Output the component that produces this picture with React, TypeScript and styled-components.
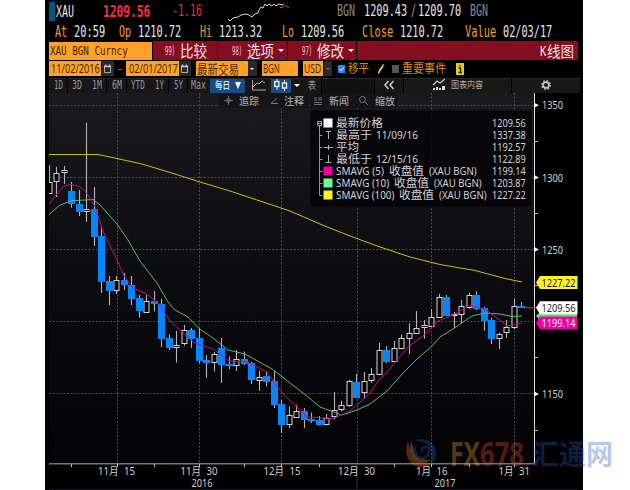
import React, { useLayoutEffect, useRef, useState } from 'react';
import styled, { createGlobalStyle } from 'styled-components';

const sans = '"Noto Sans", "Noto Sans CJK SC", sans-serif';
const mono = '"DejaVu Sans Mono", "Noto Sans CJK SC", monospace';

const GlobalStyle = createGlobalStyle`
  * { box-sizing: border-box; }
  body { margin: 0; background: #fff; overflow: hidden; }
`;

const Page = styled.div`
  width: 630px;
  height: 490px;
  padding-left: 45px;
  position: relative;
  overflow: hidden;
  background: #fff;
  font-family: ${sans};
`;

const Terminal = styled.main`
  width: 538px;
  height: 490px;
  background: #000;
  display: flex;
  flex-direction: column;
`;

const Bar = styled.div<{ $h: number; $pt?: number }>`
  height: ${(p) => p.$h}px;
  padding: ${(p) => p.$pt ?? 0}px 0 0 4px;
  display: flex;
  align-items: center;
  flex: none;
`;

const FitBox = styled.span<{ $w: number; $ml: number; $lh: number }>`
  display: block;
  flex: none;
  width: ${(p) => p.$w}px;
  height: ${(p) => p.$lh}px;
  line-height: ${(p) => p.$lh}px;
  margin-left: ${(p) => p.$ml}px;
  white-space: nowrap;
`;

const FitText = styled.span<{ $size: number; $color: string; $mono?: boolean; $weight: number }>`
  display: inline-block;
  vertical-align: top;
  transform-origin: 0 50%;
  font-family: ${(p) => (p.$mono ? mono : sans)};
  font-size: ${(p) => p.$size}px;
  font-weight: ${(p) => p.$weight};
  color: ${(p) => p.$color};
`;

type LabelProps = { text: string; w: number; ml?: number; size?: number; lh?: number; color?: string; fixed?: boolean; weight?: number };

/* Condenses a line of text to the given width. */
function Label({ text, w, ml = 0, size = 12, lh = 16, color = '#e6e6e6', fixed, weight = 400 }: LabelProps) {
  const ref = useRef<HTMLSpanElement>(null);
  const [scale, setScale] = useState(1);
  useLayoutEffect(() => {
    if (ref.current) setScale(w / ref.current.offsetWidth);
  }, [w, text]);
  return (
    <FitBox $w={w} $ml={ml} $lh={lh}>
      <FitText ref={ref} $size={size} $color={color} $mono={fixed} $weight={weight} style={{ transform: `scaleX(${scale})` }}>
        {text}
      </FitText>
    </FitBox>
  );
}

const Marker = styled.i`
  width: 6px;
  height: 19px;
  background: #00577c;
  flex: none;
`;

const Spark = styled.svg`
  width: 64px;
  height: 20px;
  margin-left: 24px;
  flex: none;
`;

const Cell = styled.div<{ $w: number; $bg: string; $ml?: number; $h?: number }>`
  width: ${(p) => p.$w}px;
  height: ${(p) => p.$h ?? 19}px;
  margin-left: ${(p) => p.$ml ?? 0}px;
  background: ${(p) => p.$bg};
  display: flex;
  align-items: center;
  flex: none;
`;

const Tab = styled(Cell)`
  background: ${(p) => p.$bg};
  justify-content: center;
  box-shadow: inset 0 1px #292929;
`;

const Caret = styled.i<{ $ml: number; $s?: number; $h?: number; $color?: string }>`
  width: 0;
  height: 0;
  margin-left: ${(p) => p.$ml}px;
  border: ${(p) => p.$s ?? 3}px solid transparent;
  border-top: ${(p) => p.$h ?? p.$s ?? 3}px solid ${(p) => p.$color ?? '#fff'};
  border-bottom-width: 0;
  flex: none;
`;

const Check = styled.span<{ $on?: boolean; $ml: number }>`
  width: 7px;
  height: 8px;
  margin-left: ${(p) => p.$ml}px;
  background: ${(p) => (p.$on ? '#198cff' : '#555')};
  display: flex;
  flex: none;
`;

const Icon = styled.svg<{ $ml?: number }>`
  margin-left: ${(p) => p.$ml ?? 0}px;
  flex: none;
  overflow: visible;
`;

const ChartArea = styled.section`
  position: relative;
  flex: 1;
`;

const ChartSvg = styled.svg`
  display: block;
  width: 538px;
  height: 397px;
`;

const Tools = styled.div`
  position: absolute;
  top: 0;
  left: 174px;
  height: 16px;
  display: flex;
  gap: 1px;
`;

const Legend = styled.div`
  position: absolute;
  left: 266px;
  top: 18px;
  width: 220px;
  height: 95px;
  padding-top: 5.5px;
  border-radius: 3px;
  background: rgba(5, 5, 9, 0.88);
  box-shadow: 0 0 0 1px #0c0c10;
`;

const LegendRow = styled.div`
  height: 12.1px;
  display: flex;
  align-items: center;
`;

const LegendMark = styled.svg`
  width: 20px;
  height: 12.1px;
  margin-left: 5px;
  flex: none;
`;

const LegendName = styled.div`
  width: 156px;
  display: flex;
`;

const Watermark = styled.svg`
  position: absolute;
  left: 400px;
  top: 430px;
  width: 220px;
  height: 45px;
  opacity: 0.33;
`;

const Calendar = () => (
  <Icon width="9" height="10" viewBox="0 0 9 10" $ml={1}>
    <path d="M1.5 3v5.500h6V3" fill="none" stroke="#aaa" />
    <path d="M1 2.500h7M2.500 0.500v2M6.500 0.500v2" stroke="#ccc" strokeWidth="1.400" />
  </Icon>
);

/* [high, body top, body bottom, low, falling] in screen rows */
const candles: [number, number, number, number, number][] = [
  [165, 181.7, 194, 194, 0], [166.7, 172.5, 181.5, 197, 0], [166, 170, 173, 184, 0], [182, 191, 204, 207.5, 1],
  [190, 203.7, 212, 216, 1], [122.7, 209, 212, 222, 0], [187, 209, 236.7, 246, 1], [226, 236, 281.7, 293, 1],
  [276, 280.5, 291, 305, 1], [276, 280, 290.7, 294, 0], [273, 279.7, 285.3, 290, 1], [276, 285, 298.7, 305, 1],
  [295, 297.7, 310.7, 317.5, 1], [295, 301, 312.7, 312.7, 0], [291, 300.7, 304, 311.5, 1], [299, 303.7, 339, 347, 1],
  [334.5, 338, 348, 350, 1], [331, 345.3, 347.7, 362.5, 0], [325, 330, 343.7, 345.7, 0], [328, 330, 338.7, 348, 1],
  [328.5, 337.7, 361, 363, 1], [355, 360.3, 362.5, 378, 1], [352, 353.7, 362.5, 371.5, 0], [338, 348, 365, 383, 1],
  [356.5, 363.7, 365.5, 369, 1], [350, 359, 365.5, 371, 0], [351.5, 359, 364, 365, 1], [362, 363.3, 380, 384, 1],
  [371, 376.5, 380.7, 391, 0], [372, 376, 382, 386.5, 1], [371, 381.3, 404.7, 408, 1], [400, 404, 425.3, 433, 1],
  [406.5, 415.3, 424.7, 428, 0], [405, 411, 417.7, 418, 0], [408, 411, 419.7, 428, 1], [412.5, 419, 421, 423, 1],
  [416, 420, 425, 425.3, 1], [414, 418, 424.7, 425.5, 0], [392, 410.3, 417.3, 419, 0], [400.7, 405.3, 410.3, 411.5, 0],
  [380, 381.3, 406.3, 406.7, 0], [374, 382, 398, 398, 1], [372, 380.7, 393.3, 398.7, 0], [368, 374, 381, 383, 0],
  [342.7, 350, 374.5, 374.7, 0], [346, 349.7, 361.7, 363, 1], [341, 348.3, 361.7, 362, 0], [334.7, 338.3, 348.7, 349.3, 0],
  [323.3, 333.3, 338.7, 354, 0], [311, 328, 333.7, 334, 0], [320, 325, 328.3, 338.7, 0], [309, 317.3, 326.7, 326.7, 0],
  [294, 297, 317.7, 317.7, 0], [295, 296.7, 315.7, 316, 1], [312, 314, 316, 328, 0], [300, 306, 315, 323.3, 0],
  [292.7, 294.7, 308.3, 308.7, 0], [291.3, 294.7, 308.7, 310, 1], [306.7, 308, 321, 330.7, 1], [317.7, 320, 338.7, 344, 1],
  [332.7, 334.3, 338.7, 349, 0], [320, 326.7, 332.7, 338, 0], [298.7, 306, 327.7, 329.3, 0], [302, 306, 308, 308, 1],
];

const sma5 =
  '49,204.5 56,195 64,186 71,184.5 79,186 86.5,193 95,206.7 102.5,230 117,260 124,276 133,288 146.7,294 160,305 170,321 182,332 195,343 213,349 229,361 247,362 267,372 282,393 300,410 307,417 333,418.5 350,411 370,393 379,380 387,372 408,347 423,336 438,321 453,315 469,305.7 485,309 495,316.7 507,326 521.7,323';
const sma10 =
  '49,214.5 60,205 72,200.7 85,200 93,199.5 100,205 117,224 128,240 140,261 157,283 168,302 175,310 188,317 198,327.7 213,338 228,350 245,354 272,369 303,393 320,407 342,415 357,410 370,404 387,391 403,373 417,359 432,346 440,337 453,329 472,316 485,313 500,314 512,316.5 522,316';
const sma100 =
  '49,154.5 98,154.5 117,158.5 142,164 175,174 200,182 230,191 260,201 290,211 320,224 350,236 380,247 410,257 440,264.5 475,270.5 505,278.5 522,282';

const columns = [117, 199, 281.5, 357, 431.5, 514.5];
const prices: [number, string][] = [[105.3, '1350'], [177.5, '1300'], [249.5, '1250'], [394, '1150']];
const rows = [105.5, 177.5, 249.5, 321.5, 393.5];
const dates: [number, string, string][] = [[98, '11', '15'], [180.5, '11', '30'], [263.5, '12', '15'], [338, '12', '30'], [416, '1', '16'], [498.5, '1', '31']];
const tags: [number, string, string, string][] = [[282.5, '#fff22b', '#222', '1227.22'], [323, '#f000a0', '#fff', '1199.14'], [307.8, '#fff', '#222', '1209.56']];

function Chart() {
  return (
    <ChartSvg viewBox="45 93 538 397">
      <defs>
        <linearGradient id="field" x1="0" y1="0" x2="0" y2="1">
          <stop offset="0" stopColor="#1a1a1d" />
          <stop offset="0.45" stopColor="#0d0d11" />
          <stop offset="1" stopColor="#030306" />
        </linearGradient>
        <clipPath id="plot"><rect x="49" y="93" width="485" height="370" /></clipPath>
      </defs>
      <rect x="49" y="93" width="485" height="370" fill="url(#field)" />
      <g stroke="#4c4c50" strokeWidth="1" strokeDasharray="2 1.6">
        {columns.map((x) => <path key={x} d={`M${Math.floor(x) + 0.5} 93V463`} />)}
        {rows.map((y) => <path key={y} d={`M49 ${y}H534`} />)}
      </g>
      <g clipPath="url(#plot)">
        {candles.map(([hi, top, bottom, lo, falling], i) => {
          const x = Math.floor(49.3 + i * 7.5) + 0.5;
          const t = Math.round(top);
          const b = Math.max(Math.round(bottom), t + 2);
          return (
            <g key={i}>
              <path d={`M${x} ${hi}V${t}M${x} ${b}V${lo}`} stroke="#b5b5b5" strokeWidth="1.1" />
              {falling ? (
                <rect x={x - 3.5} y={t} width="7" height={b - t} fill="#0785ff" />
              ) : (
                <rect x={x - 2.5} y={t + 0.5} width="5" height={b - t - 1} fill="#050508" stroke="#d4d4d4" />
              )}
            </g>
          );
        })}
        <g fill="none" strokeWidth="1" strokeLinejoin="round">
          <polyline points={sma100} stroke="#c9bd1c" />
          <polyline points={sma10} stroke="#58b86b" />
          <polyline points={sma5} stroke="#bd0b86" />
        </g>
      </g>
      <path d="M534.5 93V464" stroke="#ddd" />
      <path d="M49 463.7H535" stroke="#77757a" strokeWidth="1.600" />
      <path d="M71.5 464v3M154.5 464v3M244.5 464v3M319.5 464v3M394.5 464v3M469.5 464v3M117.5 464v3M199.5 464v3M281.5 464v3M431.5 464v3M514.5 464v3M535 141.5h3M535 213.5h3M535 285.5h3M535 357.5h3M535 430.5h3" stroke="#bbb" />
      <path d="M357 464V490" stroke="#34343a" />
      <path d="M49 489.5H577" stroke="#15152c" />
      <g fontFamily={sans} fontSize="10.5" fill="#d2d2d2">
        {prices.map(([y, label]) => (
          <g key={label}>
            <path d={`M534 ${y - 2.5}l5 2.5-5 2.5z`} fill="#fff" />
            <text x="542" y={y + 4} textLength="21" lengthAdjust="spacingAndGlyphs">{label}</text>
          </g>
        ))}
        {dates.map(([x, month, day]) => {
          const mw = month.length * 5.5;
          return (
            <g key={x}>
              <text x={x} y="475" textLength={mw} lengthAdjust="spacingAndGlyphs">{month}</text>
              <text x={x + mw} y="475" textLength="9.500" lengthAdjust="spacingAndGlyphs">月</text>
              <text x={x + mw + 15} y="475" textLength="11" lengthAdjust="spacingAndGlyphs">{day}</text>
            </g>
          );
        })}
        <text x="191.5" y="487" textLength="21" lengthAdjust="spacingAndGlyphs">2016</text>
        <text x="434.5" y="487" textLength="21" lengthAdjust="spacingAndGlyphs">2017</text>
      </g>
      <path d="M525 307.8H537" stroke="#9a581b" />
      <path d="M536 316l3-3h38v6h-38z" fill="#5ee07a" />
      {tags.map(([y, bg, fg, label]) => (
        <g key={label}>
          <path d={`M536 ${y}l4-6.500h37.500v13H540z`} fill={bg} />
          <text x="541.5" y={y + 4.2} fontFamily={sans} fontSize="11" fill={fg} textLength="34" lengthAdjust="spacingAndGlyphs">{label}</text>
        </g>
      ))}
    </ChartSvg>
  );
}

const legend: { parts: [string, number, number][]; value: string; color?: string; mark?: string }[] = [
  { parts: [['最新价格', 47, 0]], value: '1209.56', color: '#fff' },
  { parts: [['最高于', 36, 0], ['11/09/16', 42, 4]], value: '1337.38', mark: 'M10 2.5h5M12.5 2v8' },
  { parts: [['平均', 23, 0]], value: '1192.57', mark: 'M8 6.5h9M12.5 4v5M11 6.5h3' },
  { parts: [['最低于', 36, 0], ['12/15/16', 42, 4]], value: '1122.89', mark: 'M9.5 9.5h6M12.5 2v8' },
  { parts: [['SMAVG (5)', 48, 0], ['收盘值', 35, 5], ['(XAU BGN)', 48, 5]], value: '1199.14', color: '#f000a0' },
  { parts: [['SMAVG (10)', 53, 0], ['收盘值', 35, 5], ['(XAU BGN)', 48, 5]], value: '1203.87', color: '#6cff8b' },
  { parts: [['SMAVG (100)', 58, 0], ['收盘值', 35, 5], ['(XAU BGN)', 48, 5]], value: '1227.22', color: '#fff21f' },
];

const ranges: [string, number, number][] = [['1D', 18, 9], ['3D', 19, 10], ['1M', 19, 10], ['6M', 19, 10], ['YTD', 23, 14], ['1Y', 18, 9], ['5Y', 18, 9], ['Max', 22, 15]];

export default function App() {
  const tab = '#171717';
  const orange = '#ffa028';
  return (
    <Page>
      <GlobalStyle />
      <Terminal>
        <Bar $h={22} $pt={1}>
          <Marker />
          <Label text="XAU" w={18} ml={1} size={16} lh={19} fixed />
          <Label text="1209.56" w={47} ml={29} size={16} lh={19} color="#ff2b4b" weight={700} fixed />
          <Label text="-1.16" w={30} ml={22} size={15} lh={19} color="#e82645" fixed />
          <Spark viewBox="0 0 64 20">
            <path d="M2 17l2 2 3-3 5-1 3-2 5-1 3 1 3 2 3-3 3-1 1-3 2-3 2 1 2-4 2 2 2-2 3 2 2-2 2 2 3-2 3 1 2-1" fill="none" stroke="#ddd" />
            <path d="M54 5.500h3l2-2 2 1 2 1.500" fill="none" stroke="#d92c2c" />
          </Spark>
          <Label text="BGN" w={18} ml={47} size={15} lh={19} color="#88888a" fixed />
          <Label text="1209.43" w={43} ml={9} size={15} lh={19} fixed />
          <Label text="/" w={5} ml={4} size={15} lh={19} color="#aaa" fixed />
          <Label text="1209.70" w={43} ml={2} size={15} lh={19} fixed />
          <Label text="BGN" w={18} ml={9} size={15} lh={19} color="#88888a" fixed />
        </Bar>
        <Bar $h={19}>
          <Label text="At" w={12} ml={6} size={15} color="#f79a1c" fixed />
          <Label text="20:59" w={31} ml={7} size={15} fixed />
          <Label text="Op" w={12} ml={14} size={15} color="#f79a1c" fixed />
          <Label text="1210.72" w={43} ml={7} size={15} fixed />
          <Label text="Hi" w={12} ml={19} size={15} color="#f79a1c" fixed />
          <Label text="1213.32" w={43} ml={7} size={15} fixed />
          <Label text="Lo" w={12} ml={20} size={15} color="#f79a1c" fixed />
          <Label text="1209.56" w={43} ml={6.5} size={15} fixed />
          <Label text="Close" w={31} ml={18.5} size={15} color="#f79a1c" fixed />
          <Label text="1210.72" w={43} ml={7} size={15} fixed />
          <Label text="Value" w={31} ml={22} size={15} color="#f79a1c" fixed />
          <Label text="02/03/17" w={49} ml={6.5} size={15} fixed />
        </Bar>
        <Bar $h={19}>
          <Cell $w={103} $bg={orange} $h={18}>
            <Label text="XAU BGN Curncy" w={78} ml={1} size={13} color="#3c2508" fixed />
          </Cell>
          <Cell $w={64} $bg="#870d20" $ml={1}>
            <Label text="99)" w={10} ml={12} size={13} color="#e9ccd0" fixed />
            <Label text="比较" w={27} ml={5} size={16} />
          </Cell>
          <Cell $w={69} $bg="#870d20" $ml={1}>
            <Label text="98)" w={10} ml={14} size={13} color="#e9ccd0" fixed />
            <Label text="选项" w={27} ml={5} size={16} />
            <Caret $ml={4} />
          </Cell>
          <Cell $w={68} $bg="#870d20" $ml={1}>
            <Label text="97)" w={10} ml={14} size={13} color="#e9ccd0" fixed />
            <Label text="修改" w={27} ml={5} size={16} />
            <Caret $ml={4} />
          </Cell>
          <Cell $w={221} $bg="#870d20" $ml={1}>
            <Label text="K" w={6} ml={183} size={14} fixed />
            <Label text="线图" w={27} ml={0.5} size={15} />
          </Cell>
        </Bar>
        <Bar $h={17}>
          <Cell $w={52} $bg={orange} $h={15}><Label text="11/02/2016" w={49} ml={2} size={12} lh={14} color="#4a2a05" /></Cell>
          <Cell $w={12} $bg="#292929" $h={15} $ml={1}><Calendar /></Cell>
          <Label text="-" w={4} ml={4} lh={14} color="#c58025" />
          <Cell $w={53} $bg={orange} $h={15} $ml={4}><Label text="02/01/2017" w={49} ml={3} size={12} lh={14} color="#4a2a05" /></Cell>
          <Cell $w={12} $bg="#292929" $h={15}><Calendar /></Cell>
          <Cell $w={52} $bg={orange} $h={15} $ml={5}><Label text="最新交易" w={42} ml={1} size={13} lh={14} color="#4a2a05" /></Cell>
          <Cell $w={9} $bg="#292929" $h={15}><Caret $ml={2} $s={2} /></Cell>
          <Cell $w={36} $bg={orange} $h={15} $ml={5}><Label text="BGN" w={17} ml={1} lh={14} color="#4a2a05" /></Cell>
          <Cell $w={20} $bg={orange} $h={15} $ml={5}><Label text="USD" w={17} ml={1} lh={14} color="#4a2a05" /></Cell>
          <Cell $w={8} $bg="#292929" $h={15} $ml={1}><Caret $ml={2} $s={2} $color="#777" /></Cell>
          <Check $on $ml={6}>
            <svg width="7" height="8" viewBox="0 0 7 8"><path d="M1.3 4l1.5 2L6 2" fill="none" stroke="#fff" /></svg>
          </Check>
          <Label text="移平" w={21} ml={3} size={12.5} lh={14} color="#dc8610" />
          <Icon width="8" height="12" viewBox="0 0 8 12" $ml={8}>
            <path d="M1 11l1-4 4-6 1.5 1-4 6z" fill="#f1c87c" />
            <path d="M1 11l1-3 1 1z" fill="#fff" />
            <path d="M5 2l2 1" stroke="#d33" />
          </Icon>
          <Check $ml={7} />
          <Label text="重要事件" w={44} ml={3} size={12.5} lh={14} color="#dc8610" />
          <Icon width="8" height="12" viewBox="0 0 8 12" $ml={10}>
            <rect width="8" height="12" fill="#e6c91d" />
            <path d="M2.500 5h2v4M2.5 9.5h3.500M4 2v1.500" fill="none" stroke="#222" strokeWidth="1.3" />
          </Icon>
        </Bar>
        <Bar $h={16}>
          {ranges.map(([name, cell, w]) => (
            <Tab key={name} $w={cell} $h={15} $bg={tab} $ml={name === '1D' ? 0 : 0.7}>
              <Label text={name} w={w} size={11.5} lh={14} color="#999" fixed />
            </Tab>
          ))}
          <Tab $w={35.5} $h={15} $bg="#194c82" $ml={0}>
            <Label text="每日" w={15} size={10} lh={14} color="#e1eaf4" weight={500} />
            <Caret $ml={5} $s={3} $h={7} />
          </Tab>
          <Tab $w={25} $h={15} $bg={tab} $ml={1}>
            <Icon width="16" height="12" viewBox="0 0 16 12">
              <path d="M1.5 1v10H15M2 8l4-4 2 1 3-3 3 2" fill="none" stroke="#aaa" />
            </Icon>
          </Tab>
          <Tab $w={20} $h={15} $bg="#194c82">
            <Icon width="16" height="12" viewBox="0 0 16 12">
              <path d="M4 0v11M11.5 1v11" stroke="#ddd" />
              <rect x="1.8" y="2.5" width="4" height="5" fill="#194c82" stroke="#eee" strokeWidth="1.4" />
              <rect x="9.5" y="4" width="4" height="5" fill="#194c82" stroke="#eee" strokeWidth="1.4" />
            </Icon>
          </Tab>
          <Tab $w={12} $h={15} $bg={tab}><Caret $ml={0} /></Tab>
          <Tab $w={18} $h={15} $bg={tab}><Label text="表" w={8} size={10} lh={14} color="#999" /></Tab>
          <Tab $w={52} $h={15} $bg="#101010" $ml={1} />
          <Tab $w={28} $h={15} $bg={tab} $ml={1}>
            <Icon width="12" height="10" viewBox="0 0 12 10"><path d="M5.5 1L2 5l3.500 4M10.500 1L7 5l3.500 4" fill="none" stroke="#ccc" strokeWidth="1.5" /></Icon>
          </Tab>
          <Tab $w={107} $h={15} $bg={tab} $ml={1}>
            <Icon width="14" height="12" viewBox="0 0 14 12">
              <path d="M1 6l4-4 3 2 5-4" fill="none" stroke="#ccc" strokeWidth="1.2" />
              <path d="M1 9h2v2H1zM4 8h2v3H4zM7 9h2v2H7zM10 7h3v4h-3z" fill="#ddd" />
            </Icon>
            <Label text="图表内容" w={32} ml={5} size={9.5} lh={14} color="#aaa" />
          </Tab>
          <Tab $w={68} $h={15} $bg={tab} $ml={1}>
            <Icon width="12" height="12" viewBox="0 0 12 12">
              <circle cx="6" cy="6" r="4.200" fill="none" stroke="#bbb" strokeWidth="1.6" strokeDasharray="1.700 1.600" />
              <circle cx="6" cy="6" r="2.900" fill="none" stroke="#c4c4c4" strokeWidth="1.700" />
            </Icon>
          </Tab>
        </Bar>
        <ChartArea>
          <Chart />
          <Tools>
            <Cell $w={44} $h={15} $bg="#141416">
              <Icon width="9" height="9" viewBox="0 0 9 9" $ml={5}><path d="M4.500 0v9M0 4.500h9M3 3h3v3H3z" fill="none" stroke="#68686b" /></Icon>
              <Label text="追踪" w={20} ml={6} size={10.5} lh={14} color="#b4b4b4" />
            </Cell>
            <Cell $w={45} $h={15} $bg="#141416">
              <Icon width="8" height="8" viewBox="0 0 8 8" $ml={6}><path d="M7 1L1 6.500h7" fill="none" stroke="#79797c" /></Icon>
              <Label text="注释" w={20} ml={6} size={10.5} lh={14} color="#b4b4b4" />
            </Cell>
            <Cell $w={43} $h={15} $bg="#141416">
              <Icon width="8" height="8" viewBox="0 0 8 8" $ml={4}><path d="M0 1h3M4 1h4M0 3h3M4 3h4M0 5.500h8M0 7.500h8" stroke="#707073" /></Icon>
              <Label text="新闻" w={20} ml={7} size={10.5} lh={14} color="#b4b4b4" />
            </Cell>
            <Cell $w={44} $h={15} $bg="#141416">
              <Icon width="9" height="9" viewBox="0 0 9 9" $ml={5}><path d="M5.500 5.500L9 9" stroke="#777" /><circle cx="3.500" cy="3.500" r="3" fill="none" stroke="#777" /></Icon>
              <Label text="缩放" w={20} ml={7} size={10.5} lh={14} color="#b4b4b4" />
            </Cell>
          </Tools>
          <Legend>
            {legend.map((row, i) => (
              <LegendRow key={row.value}>
                <LegendMark viewBox="0 0 20 12.1">
                  {i === 0 && <path d="M1.500 4.500h4v4h-4zM2 6.500h3M3.500 8.500v4" fill="none" stroke="#aaa" />}
                  {i > 0 && <path d={i === 6 ? 'M3.500 0v6.500h3' : 'M3.500 0v12.500M3.500 6.500h3'} fill="none" stroke="#929292" />}
                  {row.color && <rect x="7.500" y="1.500" width="9" height="9" fill={row.color} />}
                  {row.mark && <path d={row.mark} fill="none" stroke="#b4b4b4" />}
                </LegendMark>
                <LegendName>
                  {row.parts.map(([text, w, ml]) => <Label key={text} text={text} w={w} ml={ml} size={11} lh={12} color="#d2d2d2" />)}
                </LegendName>
                <Label text={row.value} w={34} size={11} lh={12} color="#d2d2d2" />
              </LegendRow>
            ))}
          </Legend>
        </ChartArea>
      </Terminal>
      <Watermark viewBox="400 430 220 45">
        <path d="M408 441c-5 13 1 24 11 26 6 1 10-1 13-4-8 2-15-1-19-8-3-5-4-9-5-14z" fill="#f2702a" />
        <path d="M412 440c-4 9-2 17 5 21 5 3 10 2 14-1-8 0-13-3-16-8-2-4-3-8-3-12z" fill="#f2a03a" />
        <path d="M413 441c9-5 23-1 23 12 0 6-3 10-7 13 3-6 5-12 1-18-3-5-11-8-17-7z" fill="#245dcc" />
        <path d="M416 446c-2 4-1 9 3 11 4 3 9 0 10-5 1-3-1-6-4-5-3 0-4 3-3 5" fill="none" stroke="#245dcc" strokeWidth="2.400" />
        <text x="450" y="466" fontFamily='"Open Sans", sans-serif' fontWeight="700" fontSize="34" fill="#efaa24" textLength="30" lengthAdjust="spacingAndGlyphs">FX</text>
        <text x="480" y="466" fontFamily='"Open Sans", sans-serif' fontWeight="700" fontSize="34" fill="#ef5023" textLength="44" lengthAdjust="spacingAndGlyphs">678</text>
        <text x="532" y="465" fontFamily='"Noto Sans CJK SC", sans-serif' fontWeight="700" fontSize="28" fill="#285fc0" textLength="81" lengthAdjust="spacingAndGlyphs">汇通网</text>
      </Watermark>
    </Page>
  );
}
